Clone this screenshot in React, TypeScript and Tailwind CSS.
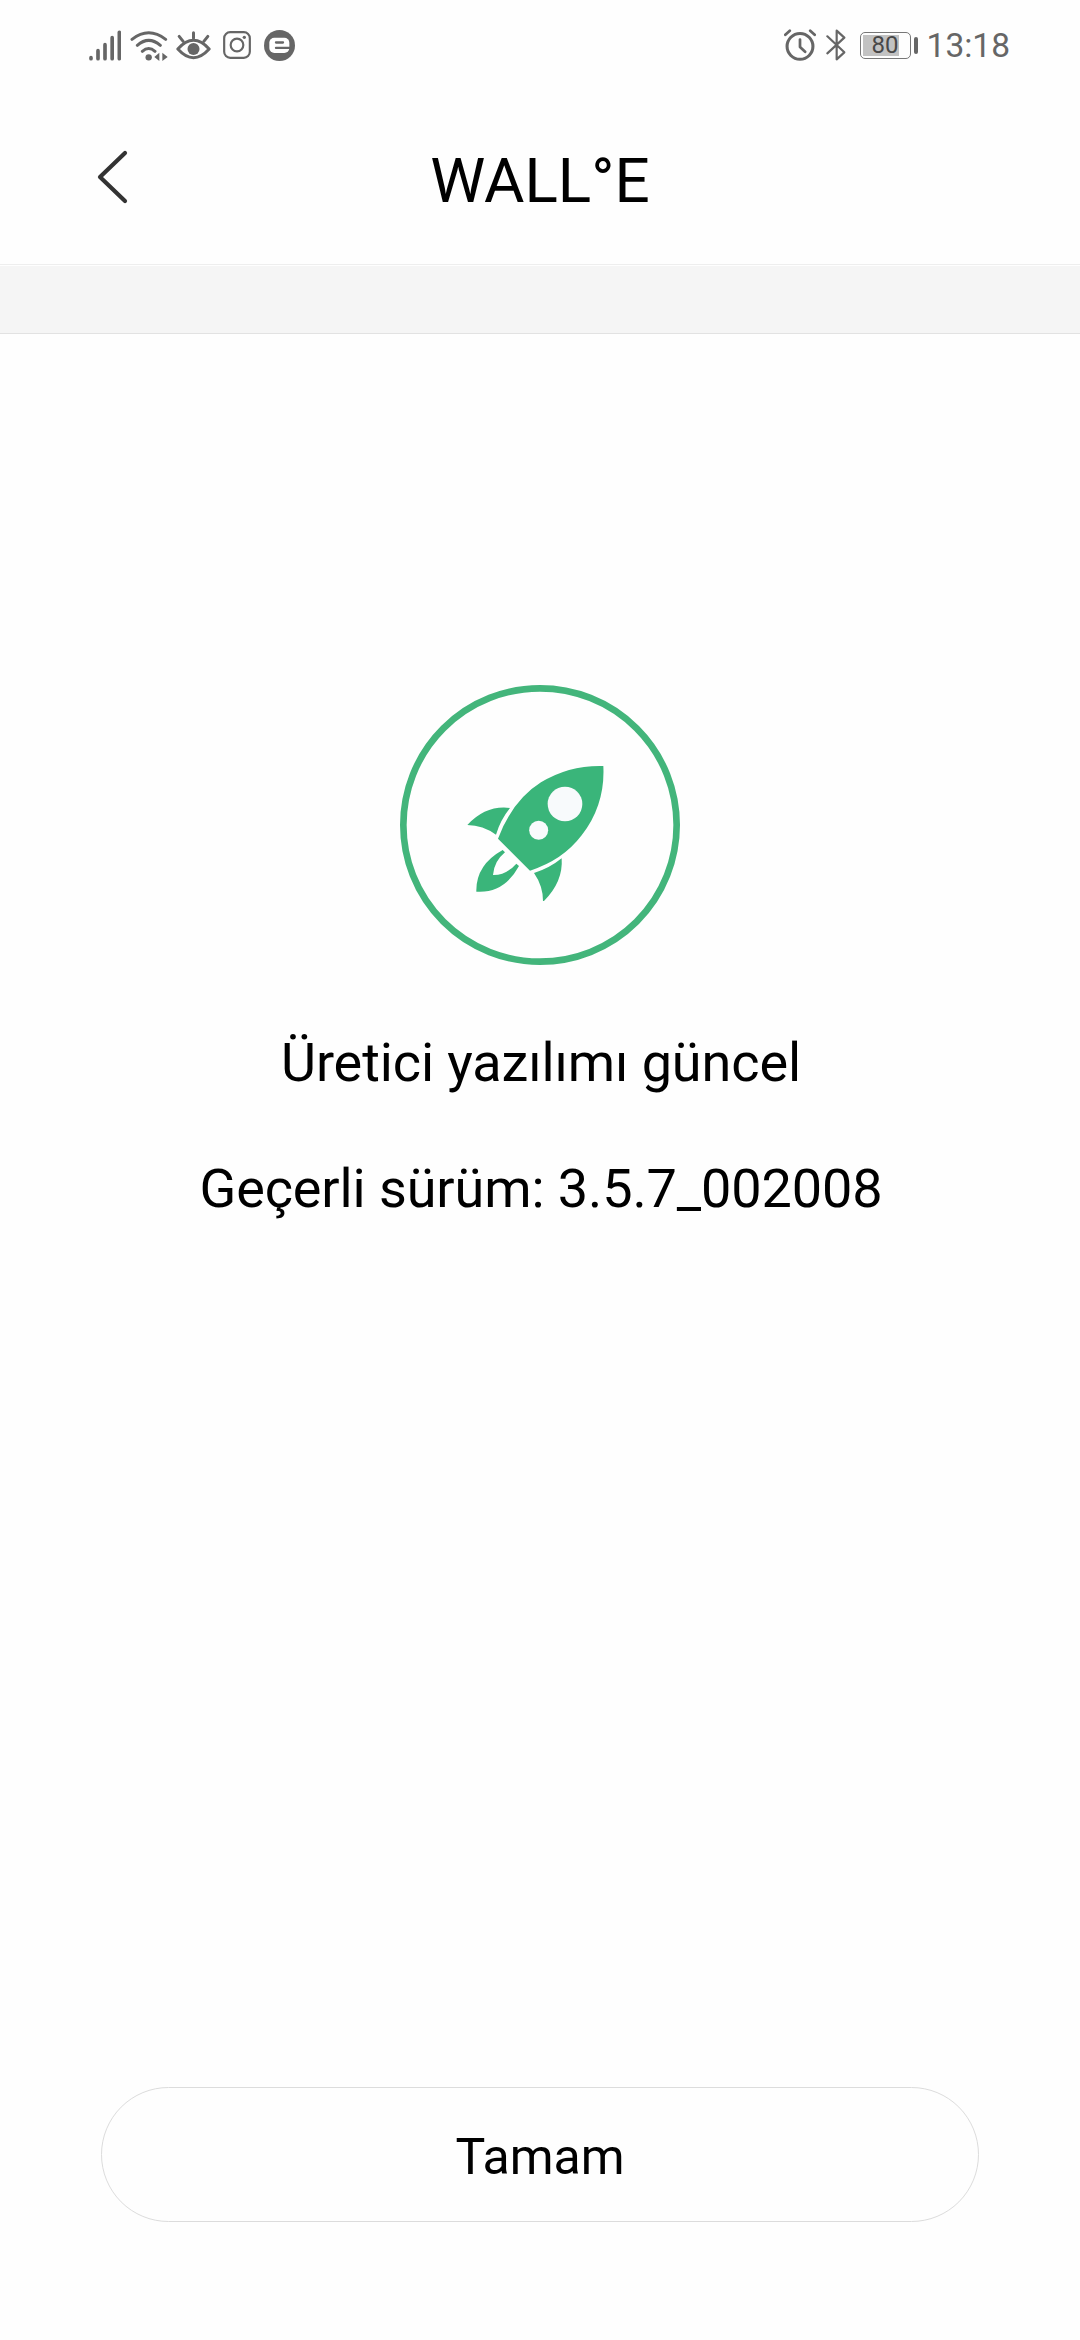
import type { ReactNode } from 'react';

interface IconProps {
  className?: string;
}

function SignalIcon({ className }: IconProps) {
  return (
    <svg viewBox="0 0 96 93" className={className} stroke="currentColor" strokeWidth="11" strokeLinecap="round">
      <path d="M6 83v3M27 62v24M48 44v42M69.500 23v63M91 7v79" />
    </svg>
  );
}

function WifiIcon({ className }: IconProps) {
  return (
    <svg viewBox="150 27 114 93" className={className} fill="none" stroke="currentColor" strokeWidth="9" strokeLinecap="round">
      <path d="M156 55q50-39 101 0M172 73q34-30 69 0M187 91q19-17 38 0" />
      <circle cx="206" cy="109" r="9.500" fill="currentColor" stroke="none" />
      <path d="M223 108l15-13v25zM263 108l-16-13v25z" fill="currentColor" stroke="none" />
    </svg>
  );
}

function EyeIcon({ className }: IconProps) {
  return (
    <svg viewBox="0 0 104 93" className={className} fill="none" stroke="currentColor" strokeWidth="9" strokeLinecap="round" strokeLinejoin="round">
      <path d="M5 57Q52 5 99 57Q52 109 5 57z" />
      <path d="M52 8v17M9 19l12 15M95 19L83 34" />
      <circle cx="52" cy="57" r="18" fill="currentColor" stroke="none" />
    </svg>
  );
}

function InstagramIcon({ className }: IconProps) {
  return (
    <svg viewBox="0 0 84 84" className={className} fill="none" stroke="currentColor" strokeWidth="6.500">
      <rect x="3.500" y="3.500" width="77" height="77" rx="18" />
      <circle cx="42" cy="42" r="19" />
      <circle cx="64" cy="19" r="5" fill="currentColor" stroke="none" />
    </svg>
  );
}

function BrowserIcon({ className }: IconProps) {
  return (
    <svg viewBox="0 0 93 93" className={className} fill="none">
      <circle cx="46.500" cy="46.500" r="46.500" fill="currentColor" />
      <rect x="16" y="23" width="60" height="46" rx="15" fill="#fff" />
      <path d="M36 37.500H57M36 53.500H80" stroke="currentColor" strokeWidth="7" strokeLinecap="round" />
    </svg>
  );
}

function AlarmIcon({ className }: IconProps) {
  return (
    <svg viewBox="0 0 94 94" className={className} fill="none" stroke="currentColor" strokeWidth="8" strokeLinecap="round" strokeLinejoin="round">
      <circle cx="47" cy="51" r="38" strokeWidth="9" />
      <path d="M47 31v22l15 14M4 17L17 5M90 17L77 5" />
    </svg>
  );
}

function BluetoothIcon({ className }: IconProps) {
  return (
    <svg viewBox="0 0 60 96" className={className} fill="none" stroke="currentColor" strokeWidth="6.500" strokeLinejoin="round" strokeLinecap="round">
      <path d="M4 22L55 70L32 91V5L55 26L4 73" />
    </svg>
  );
}

function BatteryIcon() {
  return (
    <div className="flex items-center gap-[3px]">
      <div className="flex h-[27px] w-[51px] rounded-[5px] border border-[#777] p-[2px]">
        <div className="flex h-full w-[36px] items-center bg-[#c2c2c2] pl-[9px] text-[24px] leading-none text-[#484848]">
          80
        </div>
      </div>
      <div className="h-[17px] w-[4px] rounded-[2px] bg-[#666]" />
    </div>
  );
}

function StatusBar() {
  return (
    <div className="flex h-[90px] items-center justify-between pr-[70px] pl-[89px] text-[#666]">
      <div className="flex items-center">
        <SignalIcon className="h-[31px] w-[32px]" />
        <WifiIcon className="ml-[9px] h-[31px] w-[38px]" />
        <EyeIcon className="ml-[8px] h-[31px] w-[35px]" />
        <InstagramIcon className="ml-[12px] h-[28px] w-[28px]" />
        <BrowserIcon className="ml-[13px] h-[31px] w-[31px]" />
      </div>
      <div className="flex items-center">
        <AlarmIcon className="h-[32px] w-[32px]" />
        <BluetoothIcon className="ml-[10px] h-[32px] w-[20px]" />
        <div className="ml-[14px]">
          <BatteryIcon />
        </div>
        <span className="ml-[9px] pt-[2px] text-[33.500px] leading-[40px]">13:18</span>
      </div>
    </div>
  );
}

function Header({ title }: { title: string }) {
  return (
    <header className="grid h-[175px] grid-cols-[200px_1fr_200px] items-start border-b border-[#eee] pt-[60px]">
      <button aria-label="Geri" className="pl-[97px]">
        <svg viewBox="0 0 32 54" className="h-[54px] w-[32px]" fill="none" stroke="#333" strokeWidth="4.200" strokeLinecap="round" strokeLinejoin="round">
          <path d="M28 3L3 27L28 51" />
        </svg>
      </button>
      <h1 className="pt-px text-center text-[62px] leading-[60px]">{title}</h1>
    </header>
  );
}

function RocketBadge() {
  return (
    <svg viewBox="0 0 840 840" className="size-[280px]">
      <circle cx="420" cy="420" r="410" fill="none" stroke="#43b57b" strokeWidth="20" />
      <g fill="#3ab57a">
        <path d="M610 243Q616 360 545 451Q488 526 390 557L294 461Q338 345 423 292Q508 240 610 243z" />
        <path d="M330 369Q258 360 202 420Q249 421 288 449Q301 405 330 369z" />
        <path d="M402 564Q448 550 485 520Q490 590 432 648H429Q429 603 402 564z" />
        <path d="M308 495Q227 540 229 620Q312 626 357 543L349 536Q318 571 279 570Q282 529 315 502z" />
      </g>
      <circle cx="495" cy="357" r="52" fill="#f8fafc" />
      <circle cx="416" cy="436" r="28.500" fill="#f8fafc" />
    </svg>
  );
}

function StatusText({ children }: { children: ReactNode }) {
  return <p className="text-[54px] leading-[64px] tracking-[-0.1px]">{children}</p>;
}

export default function App() {
  return (
    <div className="flex h-[2340px] w-[1080px] flex-col bg-[#fefefe] font-[Roboto,sans-serif] text-black">
      <StatusBar />
      <Header title="WALL°E" />
      <div className="mt-px h-[68px] border-b border-[#e2e2e2] bg-[#f5f5f5]" />

      <main className="flex flex-1 flex-col items-center pt-[351px]">
        <RocketBadge />
        <div className="mt-[66px] flex flex-col items-center gap-[62px] pl-[2px]">
          <StatusText>Üretici yazılımı güncel</StatusText>
          <StatusText>Geçerli sürüm: 3.5.7_002008</StatusText>
        </div>
      </main>

      <footer className="flex justify-center pb-[118px]">
        <button className="h-[135px] w-[878px] rounded-full border border-[#dcdcdc] pt-1.5 text-[50px]">
          Tamam
        </button>
      </footer>
    </div>
  );
}
